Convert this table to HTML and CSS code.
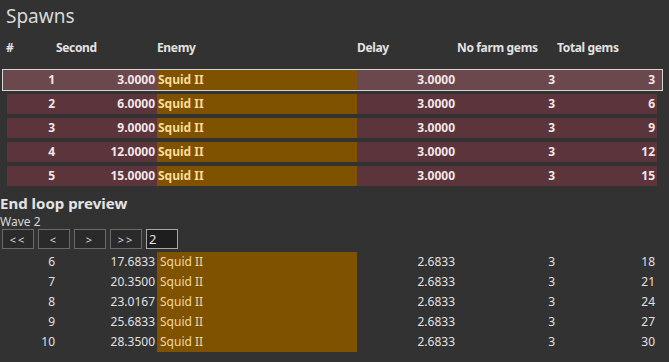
FILE: index.html
```html
<!DOCTYPE html>
<html>
<head>
<meta charset="utf-8">
<link rel="stylesheet" href="styles.css">
</head>
<body>
<h1 class="title">Spawns</h1>
<div class="grid head">
  <div>#</div><div>Second</div><div>Enemy</div><div>Delay</div><div>No farm gems</div><div>Total gems</div>
</div>
<div class="rows">
  <div class="grid row sel"><div class="num">1</div><div class="num">3.0000</div><div class="enemy">Squid II</div><div class="num">3.0000</div><div class="num">3</div><div class="num">3</div></div>
  <div class="grid row"><div class="num">2</div><div class="num">6.0000</div><div class="enemy">Squid II</div><div class="num">3.0000</div><div class="num">3</div><div class="num">6</div></div>
  <div class="grid row"><div class="num">3</div><div class="num">9.0000</div><div class="enemy">Squid II</div><div class="num">3.0000</div><div class="num">3</div><div class="num">9</div></div>
  <div class="grid row"><div class="num">4</div><div class="num">12.0000</div><div class="enemy">Squid II</div><div class="num">3.0000</div><div class="num">3</div><div class="num">12</div></div>
  <div class="grid row"><div class="num">5</div><div class="num">15.0000</div><div class="enemy">Squid II</div><div class="num">3.0000</div><div class="num">3</div><div class="num">15</div></div>
</div>
<h2 class="sub">End loop preview</h2>
<div class="wave">Wave 2</div>
<div class="controls">
  <button class="btn">&lt;&lt;</button><button class="btn">&lt;</button><button class="btn">&gt;</button><button class="btn">&gt;&gt;</button><input class="inp" type="text" value="2">
</div>
<div class="prows">
  <div class="grid prow"><div class="num">6</div><div class="num">17.6833</div><div class="enemy">Squid II</div><div class="num">2.6833</div><div class="num">3</div><div class="num">18</div></div>
  <div class="grid prow"><div class="num">7</div><div class="num">20.3500</div><div class="enemy">Squid II</div><div class="num">2.6833</div><div class="num">3</div><div class="num">21</div></div>
  <div class="grid prow"><div class="num">8</div><div class="num">23.0167</div><div class="enemy">Squid II</div><div class="num">2.6833</div><div class="num">3</div><div class="num">24</div></div>
  <div class="grid prow"><div class="num">9</div><div class="num">25.6833</div><div class="enemy">Squid II</div><div class="num">2.6833</div><div class="num">3</div><div class="num">27</div></div>
  <div class="grid prow"><div class="num">10</div><div class="num">28.3500</div><div class="enemy">Squid II</div><div class="num">2.6833</div><div class="num">3</div><div class="num">30</div></div>
</div>
</body>
</html>
```
FILE: styles.css
```css
html, body {
  margin: 0;
  padding: 0;
  background: #323232;
  color: #dcdcdc;
  font-family: "Noto Sans", "Open Sans", sans-serif;
  font-size: 12px;
  width: 669px;
  height: 362px;
  overflow: hidden;
}
.title {
  margin: 0;
  padding: 3px 0 0 6px;
  font-size: 19px;
  font-weight: 400;
  line-height: 26px;
  color: #d8d8d8;
}
.grid {
  display: grid;
  grid-template-columns: 50px 100px 200px 100px 100px 100px;
}
.head {
  margin: 9px 0 0 6px;
  height: 20px;
  line-height: 20px;
  font-weight: 700;
  color: #e2e2e2;
  letter-spacing: -0.35px;
}
.head div:nth-child(n+3) { padding-left: 1px; }
.rows {
  margin: 12px 0 0 7px;
  display: flex;
  flex-direction: column;
  gap: 4px;
  width: 650px;
}
.row {
  height: 20px;
  line-height: 20px;
  background: #5b353b;
  font-weight: 700;
  color: #f2e6e8;
}
.row.sel {
  background: #6b484e;
  margin: -1px -6px -1px -5px;
  padding: 0 5px 0 4px;
  border: 1px solid #d6d6d6;
}
.num {
  text-align: right;
  padding-right: 2px;
}
.enemy {
  background: #7f5200;
  color: #f7dc9c;
  padding-left: 1px;
}
.sub {
  margin: 7px 0 0 0;
  font-size: 15px;
  font-weight: 700;
  line-height: 21px;
  color: #e4e4e4;
}
.wave {
  line-height: 15px;
  font-size: 12px;
  color: #d8d8d8;
}
.controls {
  display: flex;
  gap: 4px;
  padding-left: 2px;
  height: 20px;
}
.btn {
  width: 32px;
  height: 20px;
  margin: 0;
  padding: 0;
  background: #2a2a2a;
  border: 1px solid #6a6a6a;
  color: #d8d8d8;
  font-family: "Noto Sans", sans-serif;
  font-size: 11px;
  letter-spacing: 2px;
  line-height: 17px;
}
.inp {
  width: 32px;
  height: 20px;
  box-sizing: border-box;
  margin: 0;
  padding: 0 0 0 2px;
  background: #1e1e1e;
  border: 1px solid #a8a8a8;
  color: #e0e0e0;
  font-family: "Noto Sans", sans-serif;
  font-size: 13px;
  line-height: 18px;
}
.prows {
  margin: 3px 0 0 7px;
  width: 650px;
}
.prow {
  height: 20px;
  line-height: 20px;
  color: #e0e0e0;
}
.prow .enemy {
  padding-left: 3px;
  color: #f3d8a6;
}
```
